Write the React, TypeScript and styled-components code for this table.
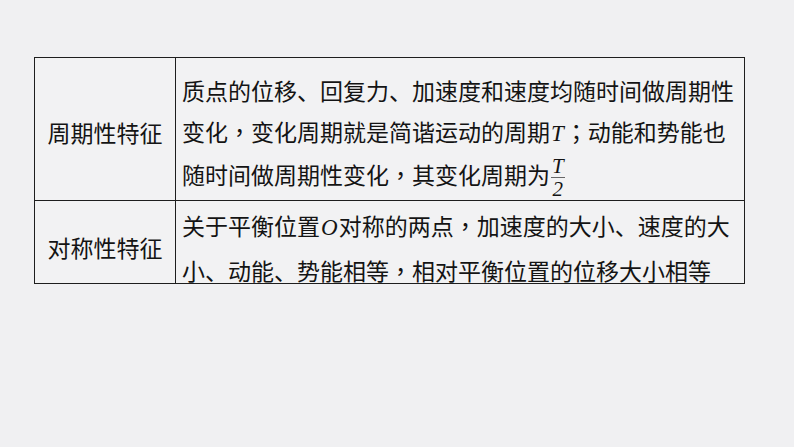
import styled, { createGlobalStyle } from 'styled-components';

const GlobalStyle = createGlobalStyle`
  html, body {
    margin: 0;
    padding: 0;
    background: #f0f0f2;
  }
  body {
    font-family: "Noto Sans CJK SC", "Noto Sans", sans-serif;
    color: #141414;
  }
`;

const Page = styled.div`
  width: 794px;
  height: 447px;
  box-sizing: border-box;
  padding: 57px 0 0 34px;
  background: #f0f0f2;
`;

const Table = styled.div`
  display: grid;
  grid-template-columns: 141px 1fr;
  grid-template-rows: 143px 82px;
  width: 711px;
  box-sizing: border-box;
  border: 1px solid #1e1e1e;
  background: #f2f2f3;
`;

const LabelCell = styled.div<{ $offset: number; $last?: boolean }>`
  display: flex;
  align-items: center;
  justify-content: center;
  box-sizing: border-box;
  padding-top: ${({ $offset }) => $offset}px;
  border-right: 1px solid #1e1e1e;
  border-bottom: ${({ $last }) => ($last ? 'none' : '1px solid #1e1e1e')};
  font-size: 23px;
  line-height: 41px;
  white-space: nowrap;
`;

const TextCell = styled.div<{ $offset: number; $last?: boolean }>`
  box-sizing: border-box;
  padding: ${({ $offset }) => $offset}px 4px 0 6px;
  border-bottom: ${({ $last }) => ($last ? 'none' : '1px solid #1e1e1e')};
  font-size: 23px;
  line-height: ${({ $last }) => ($last ? 42 : 41)}px;
  white-space: nowrap;
  overflow: visible;
`;

// full-width punctuation sits centred in the source, as in the TC forms
const Punct = styled.span`
  font-family: "Noto Sans CJK TC", "Noto Sans CJK SC", sans-serif;
`;

const Var = styled.span`
  font-family: "Liberation Serif", "Times New Roman", serif;
  font-style: italic;
  font-size: 23px;
  padding: 0 1px;
`;

const Fraction = styled.span`
  display: inline-flex;
  flex-direction: column;
  align-items: center;
  vertical-align: middle;
  font-family: "Liberation Serif", "Times New Roman", serif;
  font-size: 21px;
  line-height: 19px;
  margin-left: 1px;
`;

const Numerator = styled.span`
  font-style: italic;
  padding: 0 1px 1px;
  border-bottom: 1px solid #666;
`;

const Denominator = styled.span`
  font-style: italic;
  padding-top: 2px;
`;

export default function App() {
  return (
    <>
      <GlobalStyle />
      <Page>
        <Table>
          <LabelCell $offset={6}>周期性特征</LabelCell>
          <TextCell $offset={12}>
            质点的位移、回复力、加速度和速度均随时间做周期性
            <br />
            变化<Punct>，</Punct>变化周期就是简谐运动的周期<Var>T</Var>
            <Punct>；</Punct>动能和势能也
            <br />
            随时间做周期性变化<Punct>，</Punct>其变化周期为
            <Fraction>
              <Numerator>T</Numerator>
              <Denominator>2</Denominator>
            </Fraction>
          </TextCell>
          <LabelCell $offset={10} $last>
            对称性特征
          </LabelCell>
          <TextCell $offset={3} $last>
            关于平衡位置<Var>O</Var>对称的两点<Punct>，</Punct>加速度的大小、速度的大
            <br />
            小、动能、势能相等<Punct>，</Punct>相对平衡位置的位移大小相等
          </TextCell>
        </Table>
      </Page>
    </>
  );
}
